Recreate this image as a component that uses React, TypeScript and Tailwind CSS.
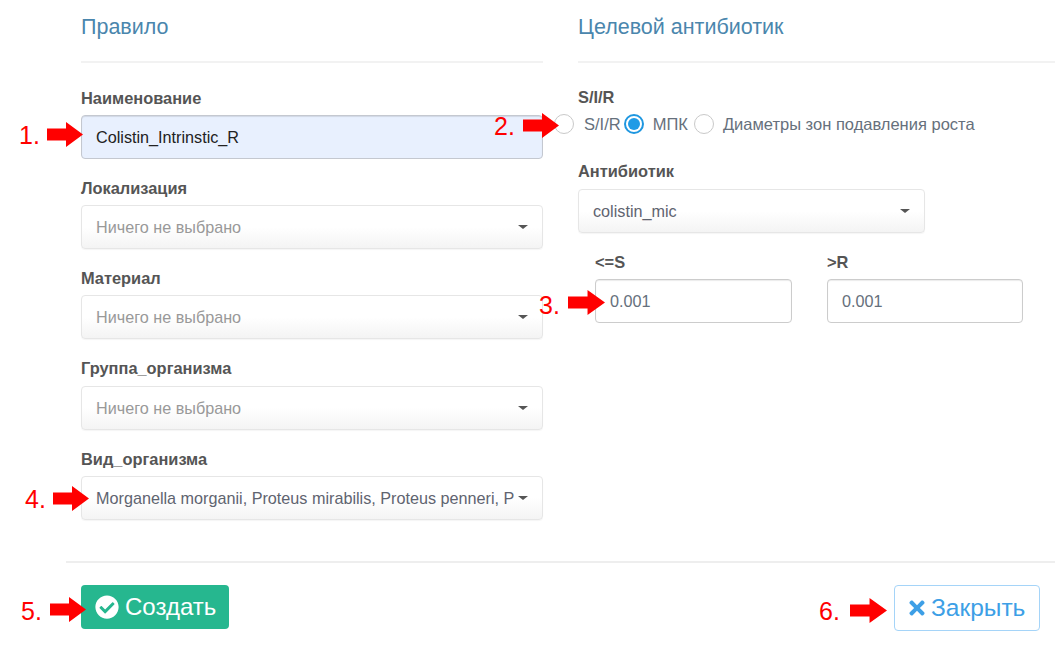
import { FaCheckCircle, FaTimes } from "react-icons/fa";

function ArrowShape({ className }: { className: string }) {
  return (
    <svg className={className} viewBox="0 0 36 25" preserveAspectRatio="none" aria-hidden="true">
      <polygon points="0,6.5 19,6.5 19,0 36,12.5 19,25 19,18.5 0,18.5" fill="#ff0000" />
    </svg>
  );
}

function Caret() {
  return <span className="h-0 w-0 shrink-0 border-x-[5px] border-t-[4px] border-x-transparent border-t-[#555]" />;
}

function Label({ children, className = "" }: { children: string; className?: string }) {
  return <div className={`pb-[2px] text-[16.4px] leading-[18px] font-bold text-[#555] ${className}`}>{children}</div>;
}

function Select({ text, muted, className = "" }: { text: string; muted?: boolean; className?: string }) {
  return (
    <div
      className={`flex h-[44px] items-center justify-between rounded-[4px] border border-[#e6e6e6] bg-gradient-to-b from-white from-50% to-[#f4f4f4] pl-[14px] pr-[14px] shadow-[0_1px_1px_rgba(0,0,0,0.04)] ${className}`}
    >
      <span className={`overflow-hidden whitespace-nowrap text-[16.2px] ${muted ? "text-[#999]" : "text-[#5f6470]"}`}>{text}</span>
      <Caret />
    </div>
  );
}

function Radio({ checked }: { checked?: boolean }) {
  return (
    <span
      className={`flex h-[20px] w-[20px] shrink-0 items-center justify-center rounded-full border bg-white ${
        checked ? "border-[#1f97e0] border-2" : "border-[#c9c9c9]"
      }`}
    >
      {checked && <span className="h-[12px] w-[12px] rounded-full bg-[#1f9be6]" />}
    </span>
  );
}

function Heading({ children }: { children: string }) {
  return (
    <div className="border-b-2 border-[#f2f2f2] pb-[21px] text-[21.5px] leading-[26px] text-[#4a86ad]">{children}</div>
  );
}

function NumberBox({ label, className }: { label: string; className: string }) {
  return (
    <div className={className}>
      <Label>{label}</Label>
      <div className="mt-[6px] flex h-[44px] items-center rounded-[4px] border border-[#ccc] bg-white pl-[14px] text-[16.2px] text-[#66707c] shadow-[inset_0_1px_1px_rgba(0,0,0,0.08)]">
        0.001
      </div>
    </div>
  );
}

const num = "absolute text-[25px] leading-[30px] text-[#ff0000]";

export default function App() {
  return (
    <div className="relative h-[646px] w-[1055px] overflow-hidden bg-white font-['Liberation_Sans',Arial,sans-serif]">
      <div className="flex h-[561px] gap-[35px] pl-[81px] pt-[14px]">
        <div className="w-[462px]">
          <Heading>Правило</Heading>
          <Label className="mt-[26px]">Наименование</Label>
          <div className="mt-[6px] flex h-[44px] items-center rounded-[4px] border border-[#c4c8d0] bg-[#e8f0fe] pl-[14px] text-[16.2px] text-[#222] shadow-[inset_0_1px_1px_rgba(0,0,0,0.1)]">
            Colistin_Intrinstic_R
          </div>
          <Label className="mt-[20px]">Локализация</Label>
          <Select className="mt-[6px]" text="Ничего не выбрано" muted />
          <Label className="mt-[20px]">Материал</Label>
          <Select className="mt-[6px]" text="Ничего не выбрано" muted />
          <Label className="mt-[20px]">Группа_организма</Label>
          <Select className="mt-[7px]" text="Ничего не выбрано" muted />
          <Label className="mt-[20px]">Вид_организма</Label>
          <Select className="mt-[6px]" text="Morganella morganii, Proteus mirabilis, Proteus penneri, P" />
        </div>
        <div className="w-[477px]">
          <Heading>Целевой антибиотик</Heading>
          <Label className="mt-[25px]">S/I/R</Label>
          <div className="ml-[-24px] mt-[6px] flex h-[20px] items-center text-[16.5px] text-[#66707c]">
            <Radio />
            <span className="ml-[10px]">S/I/R</span>
            <span className="ml-[3px]"><Radio checked /></span>
            <span className="ml-[9px]">МПК</span>
            <span className="ml-[6px]"><Radio /></span>
            <span className="ml-[9px] whitespace-nowrap">Диаметры зон подавления роста</span>
          </div>
          <Label className="mt-[28px]">Антибиотик</Label>
          <Select className="mt-[7px] w-[347px]" text="colistin_mic" />
          <div className="mt-[20px] flex pl-[17px]">
            <NumberBox label="<=S" className="w-[197px]" />
            <NumberBox label=">R" className="ml-[35px] w-[196px]" />
          </div>
        </div>
      </div>
      <div className="ml-[66px] flex items-start justify-between border-t-2 border-[#eee] pl-[15px] pr-[15px] pt-[22px]">
        <div className="flex h-[44px] w-[148px] items-center gap-[6px] rounded-[4px] bg-[#26b78f] pl-[14px] text-[24px] text-white">
          <FaCheckCircle className="h-[24px] w-[24px]" />
          <span>Создать</span>
        </div>
        <div className="flex h-[46px] w-[146px] items-center gap-[4px] rounded-[4px] border border-[#a5d4f8] bg-white pl-[12px] text-[24.5px] text-[#3d9fe6]">
          <FaTimes className="h-[22px] w-[20px]" />
          <span>Закрыть</span>
        </div>
      </div>

      <span className={`${num} left-[19px] top-[120px]`}>1.</span>
      <ArrowShape className="absolute left-[47px] top-[122px] h-[25px] w-[36px]" />
      <span className={`${num} left-[494px] top-[111px]`}>2.</span>
      <ArrowShape className="absolute left-[523px] top-[113px] h-[25px] w-[36px]" />
      <span className={`${num} left-[539px] top-[290px]`}>3.</span>
      <ArrowShape className="absolute left-[568px] top-[290px] h-[25px] w-[37px]" />
      <span className={`${num} left-[25px] top-[484px]`}>4.</span>
      <ArrowShape className="absolute left-[53px] top-[486px] h-[25px] w-[36px]" />
      <span className={`${num} left-[21px] top-[596px]`}>5.</span>
      <ArrowShape className="absolute left-[50px] top-[597px] h-[25px] w-[36px]" />
      <span className={`${num} left-[819px] top-[596px]`}>6.</span>
      <ArrowShape className="absolute left-[850px] top-[598px] h-[25px] w-[37px]" />
    </div>
  );
}
